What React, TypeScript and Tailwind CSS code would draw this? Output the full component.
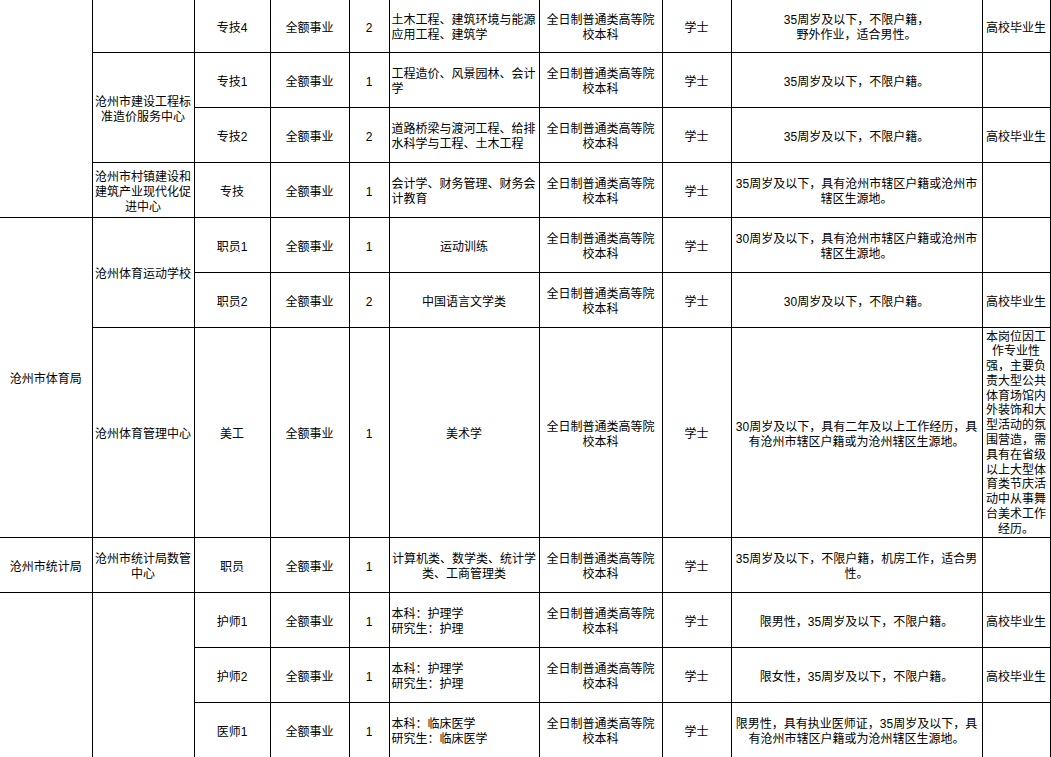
import React from "react";

const cell = "border border-black align-middle text-center px-[2px] pt-[5px] pb-0";

const Lines = ({ t }: { t: string[] }) => (
  <>
    {t.map((s, i) => (
      <React.Fragment key={i}>
        {i > 0 && <br />}
        {s}
      </React.Fragment>
    ))}
  </>
);

type Row = {
  h: number;
  post: string;
  num: string;
  major: string[];
  left?: boolean;
  cond: string[];
  note?: string[];
  pre?: React.ReactNode;
  top?: boolean;
};

const edu = ["全日制普通类高等院", "校本科"];

const rows: Row[] = [
  {
    h: 52,
    top: true,
    pre: (
      <>
        <td rowSpan={4} className={`${cell} border-l-0 border-t-0`}></td>
        <td className={`${cell} border-t-0`}></td>
      </>
    ),
    post: "专技4",
    num: "2",
    major: ["土木工程、建筑环境与能源", "应用工程、建筑学"],
    left: true,
    cond: ["35周岁及以下，不限户籍，", "野外作业，适合男性。"],
    note: ["高校毕业生"],
  },
  {
    h: 55,
    pre: (
      <td rowSpan={2} className={cell}>
        <Lines t={["沧州市建设工程标", "准造价服务中心"]} />
      </td>
    ),
    post: "专技1",
    num: "1",
    major: ["工程造价、风景园林、会计", "学"],
    left: true,
    cond: ["35周岁及以下，不限户籍。"],
  },
  {
    h: 55,
    post: "专技2",
    num: "2",
    major: ["道路桥梁与渡河工程、给排", "水科学与工程、土木工程"],
    left: true,
    cond: ["35周岁及以下，不限户籍。"],
    note: ["高校毕业生"],
  },
  {
    h: 55,
    pre: (
      <td className={cell}>
        <Lines t={["沧州市村镇建设和", "建筑产业现代化促", "进中心"]} />
      </td>
    ),
    post: "专技",
    num: "1",
    major: ["会计学、财务管理、财务会", "计教育"],
    left: true,
    cond: ["35周岁及以下，具有沧州市辖区户籍或沧州市", "辖区生源地。"],
  },
  {
    h: 55,
    pre: (
      <>
        <td rowSpan={3} className={`${cell} border-l-0`}>沧州市体育局</td>
        <td rowSpan={2} className={cell}>沧州体育运动学校</td>
      </>
    ),
    post: "职员1",
    num: "1",
    major: ["运动训练"],
    cond: ["30周岁及以下，具有沧州市辖区户籍或沧州市", "辖区生源地。"],
  },
  {
    h: 55,
    post: "职员2",
    num: "2",
    major: ["中国语言文学类"],
    cond: ["30周岁及以下，不限户籍。"],
    note: ["高校毕业生"],
  },
  {
    h: 210,
    pre: <td className={cell}>沧州体育管理中心</td>,
    post: "美工",
    num: "1",
    major: ["美术学"],
    cond: ["30周岁及以下，具有二年及以上工作经历，具", "有沧州市辖区户籍或为沧州辖区生源地。"],
    note: [
      "本岗位因工",
      "作专业性",
      "强，主要负",
      "责大型公共",
      "体育场馆内",
      "外装饰和大",
      "型活动的氛",
      "围营造，需",
      "具有在省级",
      "以上大型体",
      "育类节庆活",
      "动中从事舞",
      "台美术工作",
      "经历。",
    ],
  },
  {
    h: 55,
    pre: (
      <>
        <td className={`${cell} border-l-0`}>沧州市统计局</td>
        <td className={cell}>
          <Lines t={["沧州市统计局数管", "中心"]} />
        </td>
      </>
    ),
    post: "职员",
    num: "1",
    major: ["计算机类、数学类、统计学", "类、工商管理类"],
    cond: ["35周岁及以下，不限户籍，机房工作，适合男", "性。"],
  },
  {
    h: 55,
    pre: (
      <>
        <td rowSpan={3} className={`${cell} border-l-0`}></td>
        <td rowSpan={3} className={cell}></td>
      </>
    ),
    post: "护师1",
    num: "1",
    major: ["本科：护理学", "研究生：护理"],
    left: true,
    cond: ["限男性，35周岁及以下，不限户籍。"],
    note: ["高校毕业生"],
  },
  {
    h: 55,
    post: "护师2",
    num: "1",
    major: ["本科：护理学", "研究生：护理"],
    left: true,
    cond: ["限女性，35周岁及以下，不限户籍。"],
    note: ["高校毕业生"],
  },
  {
    h: 55,
    post: "医师1",
    num: "1",
    major: ["本科：临床医学", "研究生：临床医学"],
    left: true,
    cond: ["限男性，具有执业医师证，35周岁及以下，具", "有沧州市辖区户籍或为沧州辖区生源地。"],
  },
];

const widths = [92, 102, 76, 79, 40, 150, 123, 69, 251, 68];

export default function App() {
  return (
    <div
      className="w-[1051px] h-[757px] overflow-hidden bg-white text-black text-[12px] leading-[15px]"
      style={{ fontFamily: '"Liberation Sans", "Noto Sans CJK SC", sans-serif' }}
    >
      <table className="table-fixed border-collapse w-[1050px]">
        <colgroup>
          {widths.map((w, i) => (
            <col key={i} style={{ width: w }} />
          ))}
        </colgroup>
        <tbody>
          {rows.map((r, i) => {
            const t = r.top ? "border-t-0" : "";
            const long = r.note && r.note.length > 1;
            return (
              <tr key={i} style={{ height: r.h }}>
                {r.pre}
                <td className={`${cell} ${t}`}>{r.post}</td>
                <td className={`${cell} ${t}`}>全额事业</td>
                <td className={`${cell} ${t}`}>{r.num}</td>
                <td className={`${cell} ${t} ${r.left ? "text-left" : ""}`}>
                  <Lines t={r.major} />
                </td>
                <td className={`${cell} ${t}`}>
                  <Lines t={edu} />
                </td>
                <td className={`${cell} ${t}`}>学士</td>
                <td className={`${cell} ${t}`}>
                  <Lines t={r.cond} />
                </td>
                <td className={`${cell} ${t} ${long ? "leading-[14.8px] !pt-[2px]" : ""}`}>
                  {r.note && <Lines t={r.note} />}
                </td>
              </tr>
            );
          })}
        </tbody>
      </table>
    </div>
  );
}
